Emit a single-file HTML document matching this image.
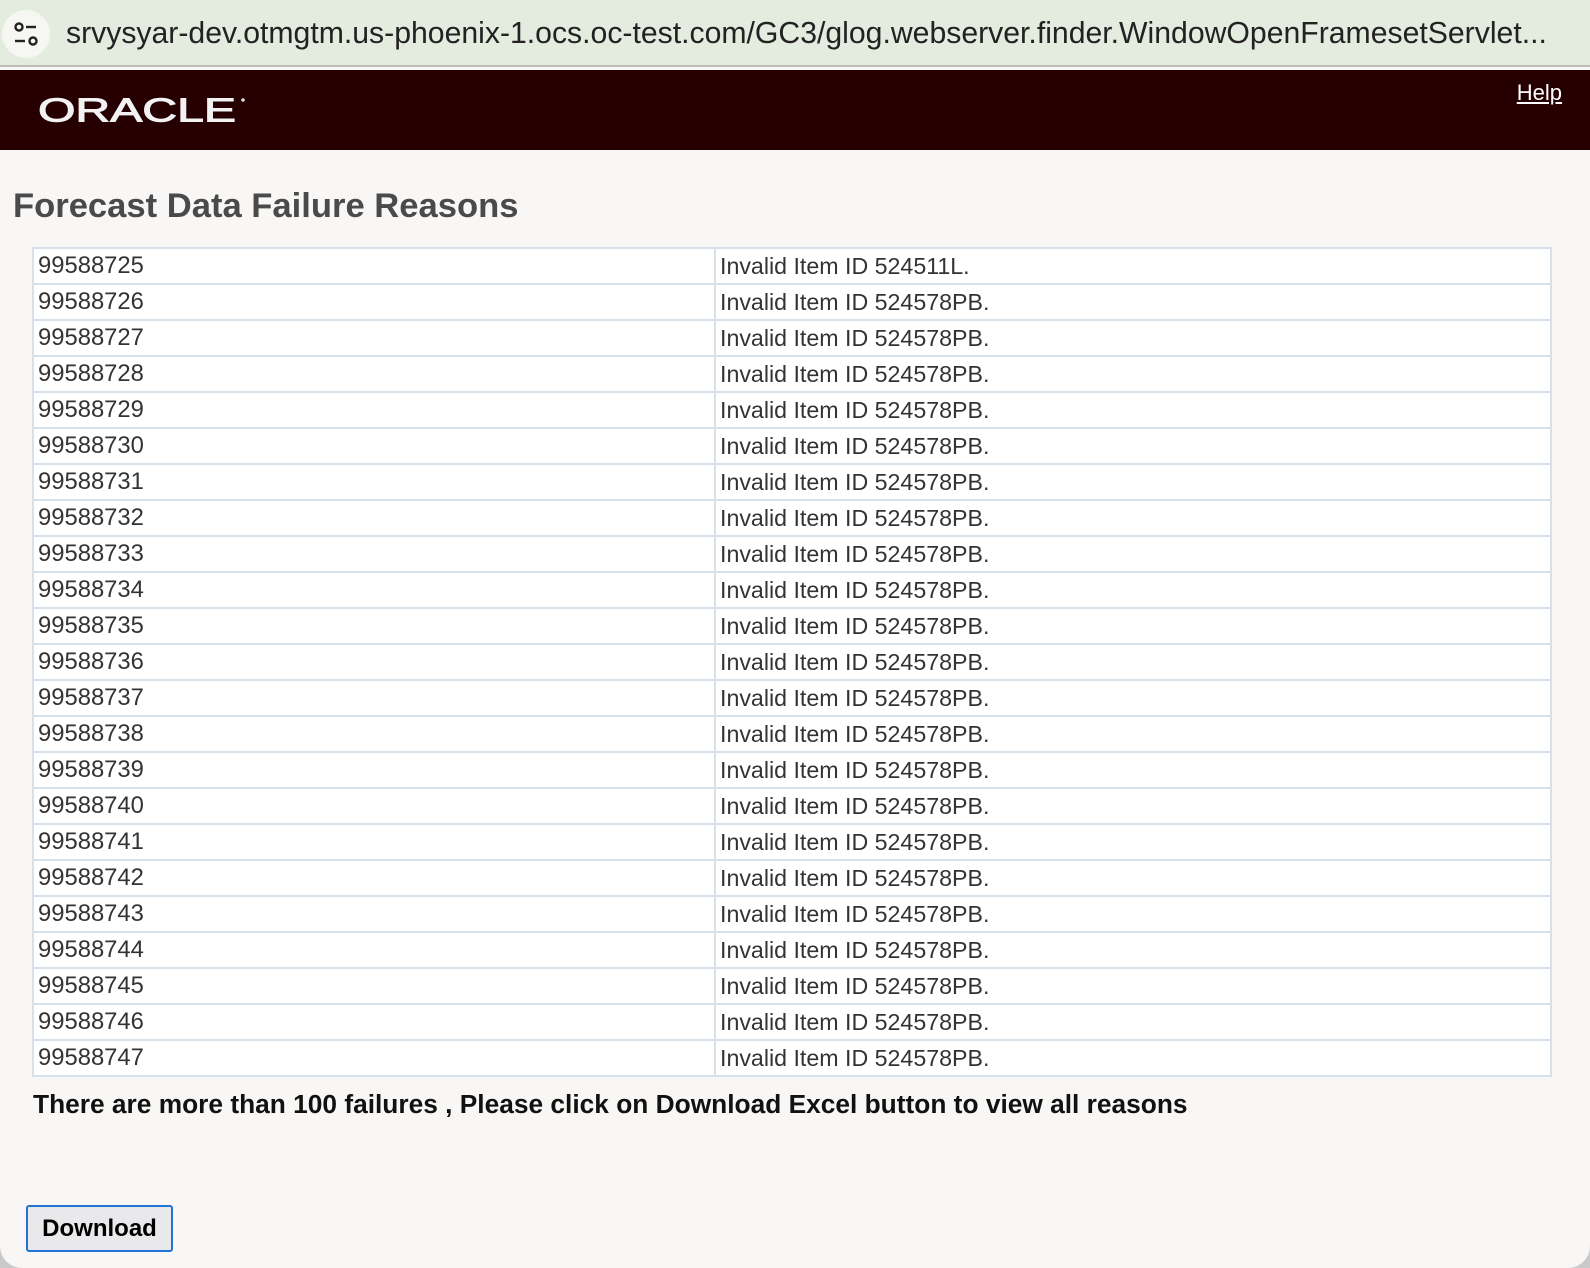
<!DOCTYPE html>
<html><head><meta charset="utf-8"><style>
*{margin:0;padding:0;box-sizing:border-box}
html,body{width:1590px;height:1268px;overflow:hidden;background:#c9c9c9;font-family:"Liberation Sans",sans-serif}
#win{position:absolute;left:0;top:0;width:1590px;height:1268px;background:#f8f7f5;border-bottom-left-radius:22px;border-bottom-right-radius:22px;overflow:hidden}
#url{position:absolute;left:0;top:0;width:1590px;height:67px;background:#e4ebdf;border-bottom:2px solid #b9bdb5}
#url .ic{position:absolute;left:2px;top:10px;width:48px;height:48px;border-radius:50%;background:#f6f7f3}
#url .t{position:absolute;left:66px;top:17px;font-size:30.2px;color:#222;white-space:nowrap}
#hdr{position:absolute;left:0;top:70px;width:1590px;height:80px;background:#260000}
#help{position:absolute;right:28px;top:10px;color:#fff;font-size:22px;text-decoration:underline}
h1{position:absolute;left:13px;top:187px;font-size:34.6px;font-weight:bold;color:#4a4a4a}
table{position:absolute;left:32px;top:247px;width:1520px;border-collapse:collapse;background:#fff}
td{border:2px solid #d8e1e9;height:36px;font-size:23.2px;color:#333;padding:0 0 0 4px;vertical-align:middle}
td:first-child{width:682px;font-size:23.8px}
#note{position:absolute;left:33px;top:1089px;font-size:26.3px;font-weight:bold;color:#111}
#btn{position:absolute;left:26px;top:1205px;width:147px;height:47px;border:2px solid #1f74d6;border-radius:3px;background:#e9e9ec;font-size:24px;font-weight:bold;color:#000;text-align:center;line-height:43px}
</style></head><body><div id="win">
<div id="url"><div class="ic"><svg width="48" height="48" viewBox="0 0 48 48"><circle cx="17" cy="17" r="3.5" fill="none" stroke="#222" stroke-width="2.4"/><line x1="24" y1="17" x2="34" y2="17" stroke="#222" stroke-width="2.4"/><line x1="13" y1="31" x2="23" y2="31" stroke="#222" stroke-width="2.4"/><circle cx="31" cy="31" r="3.5" fill="none" stroke="#222" stroke-width="2.4"/></svg></div>
<div class="t">srvysyar-dev.otmgtm.us-phoenix-1.ocs.oc-test.com/GC3/glog.webserver.finder.WindowOpenFramesetServlet...</div></div>
<div id="hdr"><svg style="position:absolute;left:36px;top:26px" width="212" height="32"><text x="2" y="27" font-family="Liberation Sans" font-size="35" fill="#f2f2f2" stroke="#f2f2f2" stroke-width="1" textLength="198" lengthAdjust="spacingAndGlyphs" transform="scale(1,0.95)">ORACLE</text><circle cx="207" cy="4" r="1.8" fill="#ddd"/></svg><a id="help">Help</a></div>
<h1>Forecast Data Failure Reasons</h1>
<table>
<tr><td>99588725</td><td>Invalid Item ID 524511L.</td></tr>
<tr><td>99588726</td><td>Invalid Item ID 524578PB.</td></tr>
<tr><td>99588727</td><td>Invalid Item ID 524578PB.</td></tr>
<tr><td>99588728</td><td>Invalid Item ID 524578PB.</td></tr>
<tr><td>99588729</td><td>Invalid Item ID 524578PB.</td></tr>
<tr><td>99588730</td><td>Invalid Item ID 524578PB.</td></tr>
<tr><td>99588731</td><td>Invalid Item ID 524578PB.</td></tr>
<tr><td>99588732</td><td>Invalid Item ID 524578PB.</td></tr>
<tr><td>99588733</td><td>Invalid Item ID 524578PB.</td></tr>
<tr><td>99588734</td><td>Invalid Item ID 524578PB.</td></tr>
<tr><td>99588735</td><td>Invalid Item ID 524578PB.</td></tr>
<tr><td>99588736</td><td>Invalid Item ID 524578PB.</td></tr>
<tr><td>99588737</td><td>Invalid Item ID 524578PB.</td></tr>
<tr><td>99588738</td><td>Invalid Item ID 524578PB.</td></tr>
<tr><td>99588739</td><td>Invalid Item ID 524578PB.</td></tr>
<tr><td>99588740</td><td>Invalid Item ID 524578PB.</td></tr>
<tr><td>99588741</td><td>Invalid Item ID 524578PB.</td></tr>
<tr><td>99588742</td><td>Invalid Item ID 524578PB.</td></tr>
<tr><td>99588743</td><td>Invalid Item ID 524578PB.</td></tr>
<tr><td>99588744</td><td>Invalid Item ID 524578PB.</td></tr>
<tr><td>99588745</td><td>Invalid Item ID 524578PB.</td></tr>
<tr><td>99588746</td><td>Invalid Item ID 524578PB.</td></tr>
<tr><td>99588747</td><td>Invalid Item ID 524578PB.</td></tr>
</table>
<div id="note">There are more than 100 failures , Please click on Download Excel button to view all reasons</div>
<div id="btn">Download</div>
</div></body></html>
